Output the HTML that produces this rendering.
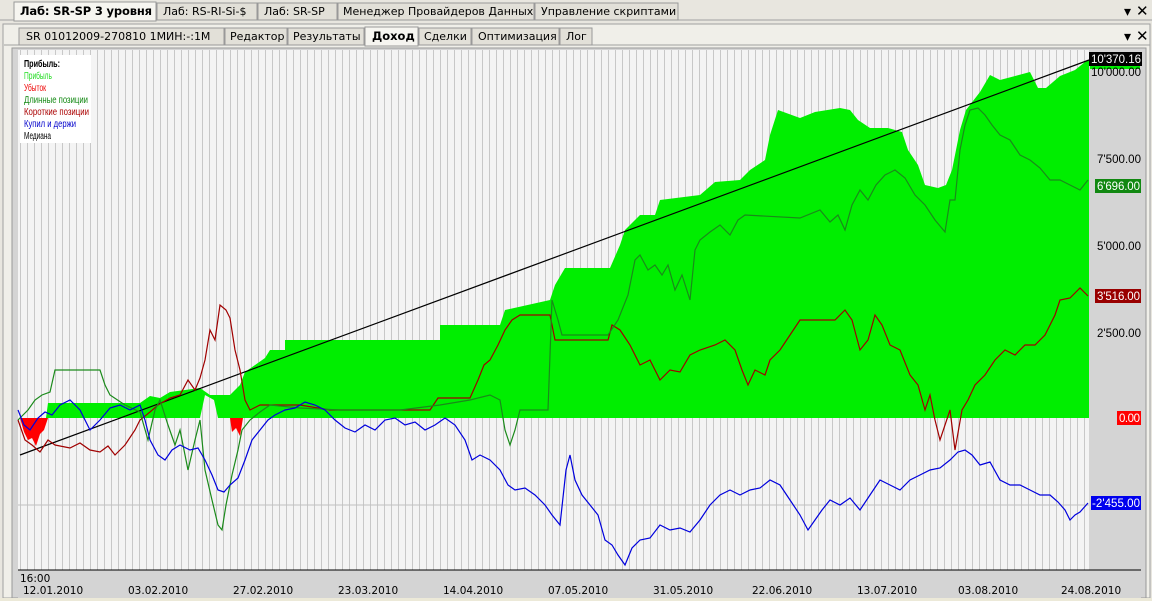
<!DOCTYPE html><html><head><meta charset="utf-8"><style>
body{margin:0;width:1152px;height:598px;overflow:hidden;background:#ece9d8;font-family:"Liberation Sans",sans-serif;font-size:12px}
svg text{font-family:"DejaVu Sans","Liberation Sans",sans-serif}
svg .l{font-family:"Liberation Sans",sans-serif}
</style></head><body>
<svg width="1152" height="598" xmlns="http://www.w3.org/2000/svg">
<defs><pattern id="g" x="20" y="0" width="7" height="10" patternUnits="userSpaceOnUse"><rect width="7" height="10" fill="#f4f4f4"/><rect x="0" width="1" height="10" fill="#c8c8c8"/></pattern></defs>
<rect width="1152" height="598" fill="#e8e6df"/>
<line x1="0" y1="20" x2="1152" y2="20" stroke="#a0a0a0"/>
<rect x="338" y="3" width="196" height="17" fill="#e2e0d8" stroke="#999"/>
<text x="343" y="15" font-size="11">Менеджер Провайдеров Данных</text>
<rect x="535" y="3" width="143" height="17" fill="#e2e0d8" stroke="#999"/>
<text x="541" y="15" font-size="11">Управление скриптами</text>
<rect x="157" y="3" width="100" height="17" fill="#e2e0d8" stroke="#999"/>
<text x="163" y="15" font-size="11">Лаб: RS-RI-Si-$</text>
<rect x="258" y="3" width="79" height="17" fill="#e2e0d8" stroke="#999"/>
<text x="264" y="15" font-size="11">Лаб: SR-SP</text>
<rect x="14" y="2" width="142" height="19" fill="#f6f5f0" stroke="#999"/>
<text x="20" y="15" font-size="11.5" font-weight="bold" textLength="132">Лаб: SR-SP 3 уровня</text>
<text x="1124" y="16" font-size="14">▾</text><text x="1136" y="16" font-size="15">✕</text>
<rect x="3" y="24" width="1147" height="574" fill="#f0efe9" stroke="#a0a0a0"/>
<line x1="4" y1="45" x2="1150" y2="45" stroke="#a0a0a0"/>
<rect x="19" y="28" width="205" height="17" fill="#e2e0d8" stroke="#999"/>
<text x="26" y="40" font-size="11">SR 01012009-270810 1МИН:-:1М</text>
<rect x="225" y="28" width="62" height="17" fill="#e2e0d8" stroke="#999"/>
<text x="230" y="40" font-size="11">Редактор</text>
<rect x="288" y="28" width="76" height="17" fill="#e2e0d8" stroke="#999"/>
<text x="293" y="40" font-size="11">Результаты</text>
<rect x="365" y="27" width="53" height="19" fill="#f6f5f0" stroke="#999"/>
<text x="372" y="40" font-size="11.5" font-weight="bold">Доход</text>
<rect x="419" y="28" width="52" height="17" fill="#e2e0d8" stroke="#999"/>
<text x="424" y="40" font-size="11">Сделки</text>
<rect x="472" y="28" width="87" height="17" fill="#e2e0d8" stroke="#999"/>
<text x="478" y="40" font-size="11">Оптимизация</text>
<rect x="560" y="28" width="32" height="17" fill="#e2e0d8" stroke="#999"/>
<text x="566" y="40" font-size="11">Лог</text>
<text x="1124" y="41" font-size="14">▾</text><text x="1136" y="41" font-size="15">✕</text>
<rect x="12" y="48" width="1134" height="550" fill="#d4d4d4" stroke="#999"/>
<rect x="18" y="50" width="1071" height="520" fill="url(#g)"/>
<line x1="18" y1="505" x2="1089" y2="505" stroke="#c0c0c0"/>
<polygon fill="#ff0000" points="20,418 24,432 28,440 32,438 36,446 40,434 44,430 48,418" />
<polygon fill="#ff0000" points="230,418 232,432 236,428 240,436 243,418"/>
<polygon fill="#00ee00" points="46,418 48,403 140,403 150,396 160,398 170,392 200,388 210,395 230,395 240,385 245,372 265,358 270,350 285,350 285,340 440,340 440,325 500,325 505,310 550,300 555,285 565,268 610,268 620,245 625,230 640,215 655,215 660,200 700,195 715,182 740,180 750,170 765,160 770,135 778,110 800,118 815,112 840,108 850,110 858,120 870,128 888,128 902,132 908,150 918,165 925,185 938,188 946,185 952,170 960,130 966,110 980,92 990,75 1000,80 1030,72 1038,88 1046,88 1060,76 1075,70 1085,62 1089,60 1089,418 246,418 243,418 230,418 218,418 214,400 205,395 200,418"/>
<line x1="20" y1="455" x2="1089" y2="60" stroke="#000" stroke-width="1.2"/>
<polyline fill="none" stroke="#a00000" stroke-width="1.2" points="18,420 25,440 32,445 40,452 48,440 55,445 70,448 80,443 90,450 100,452 108,446 115,455 125,445 135,430 140,420 150,412 158,405 170,398 180,395 188,380 195,390 200,378 205,360 210,330 215,340 220,305 226,310 230,318 235,350 240,370 245,400 250,410 260,405 300,405 330,410 430,410 438,398 470,398 478,380 484,365 490,360 498,345 505,330 512,320 520,315 550,315 555,340 608,340 612,325 620,330 630,345 640,365 650,360 660,380 670,370 680,372 690,355 700,350 715,345 725,340 735,350 742,370 748,385 755,370 765,375 770,360 780,350 790,335 800,320 835,320 845,310 852,320 860,350 868,340 875,315 882,325 890,345 900,350 910,375 918,385 925,410 930,395 935,420 940,440 945,425 950,410 955,450 962,410 968,400 975,385 985,375 995,360 1005,350 1015,355 1025,345 1035,345 1045,335 1055,315 1060,300 1070,298 1080,288 1088,296"/>
<polyline fill="none" stroke="#1a8a1a" stroke-width="1.2" points="18,420 28,410 35,400 42,395 50,392 55,370 100,370 105,385 110,395 125,405 140,412 148,440 155,410 160,400 168,425 175,445 180,430 188,470 195,440 200,420 205,470 212,500 218,525 222,530 226,505 232,475 238,450 242,430 250,420 260,412 270,405 300,408 340,410 400,410 440,405 470,400 490,395 500,400 505,430 510,445 515,430 520,410 548,410 552,300 558,320 562,335 608,335 618,320 628,295 635,260 640,255 648,270 655,265 662,275 668,265 675,290 682,275 690,300 695,250 700,240 710,232 720,225 730,235 738,220 745,215 800,218 820,210 830,222 838,215 845,230 852,205 860,190 868,200 876,185 885,175 895,170 905,178 915,195 925,205 935,220 945,232 950,200 955,200 960,150 965,125 970,110 978,108 985,115 992,125 1000,135 1010,140 1020,155 1030,160 1040,168 1050,180 1060,180 1070,185 1080,190 1088,180"/>
<polyline fill="none" stroke="#0000dd" stroke-width="1.2" points="18,410 24,425 30,430 38,418 45,412 52,415 60,405 70,400 80,410 90,430 100,420 110,408 120,405 130,410 140,405 145,420 150,440 158,455 165,460 172,450 180,445 190,450 198,448 205,460 212,475 218,490 224,492 230,485 238,478 245,460 252,440 260,430 268,420 275,415 285,410 295,408 305,402 315,405 325,410 335,420 345,428 355,432 365,425 375,430 385,420 395,418 405,425 415,422 425,430 435,425 445,418 455,425 465,440 472,460 480,455 490,460 500,470 508,485 515,490 525,488 535,495 545,505 552,515 560,525 566,470 570,455 575,480 582,495 590,505 598,515 605,540 612,545 618,555 625,565 632,548 640,540 650,538 660,525 670,530 680,528 690,532 700,520 710,505 720,495 730,490 740,495 750,490 760,488 770,480 780,485 790,500 800,515 808,530 815,520 822,510 830,500 840,505 850,498 860,510 870,495 880,480 890,485 900,490 910,480 920,475 930,470 940,468 950,460 958,452 965,450 972,455 980,465 990,462 1000,480 1010,485 1020,485 1030,490 1040,495 1050,495 1058,502 1065,510 1070,520 1075,515 1080,512 1088,503"/>
<rect x="20" y="55" width="71" height="88" fill="#fff"/>
<g font-size="10" class="l">
<text class="l" x="24" y="67" font-weight="bold" fill="#000" textLength="36" lengthAdjust="spacingAndGlyphs">Прибыль:</text>
<text class="l" x="24" y="79" fill="#22dd22" textLength="28" lengthAdjust="spacingAndGlyphs">Прибыль</text>
<text class="l" x="24" y="91" fill="#ee0000" textLength="22" lengthAdjust="spacingAndGlyphs">Убыток</text>
<text class="l" x="24" y="103" fill="#118811" textLength="64" lengthAdjust="spacingAndGlyphs">Длинные позиции</text>
<text class="l" x="24" y="115" fill="#aa0000" textLength="65" lengthAdjust="spacingAndGlyphs">Короткие позиции</text>
<text class="l" x="24" y="127" fill="#0000cc" textLength="52" lengthAdjust="spacingAndGlyphs">Купил и держи</text>
<text class="l" x="24" y="139" fill="#000" textLength="27" lengthAdjust="spacingAndGlyphs">Медиана</text>
</g>
<g font-size="11.5">
<rect x="1089" y="52" width="53" height="14" fill="#000"/><text class="l" x="1091" y="63" fill="#fff" textLength="50">10'370.16</text>
<rect x="1090" y="66" width="50" height="3" fill="#00ee00"/>
<text class="l" x="1091" y="76" fill="#000" textLength="50">10'000.00</text>
<text class="l" x="1097" y="163" fill="#000" textLength="44">7'500.00</text>
<rect x="1095" y="179" width="46" height="14" fill="#118811"/><text class="l" x="1097" y="190" fill="#fff" textLength="43">6'696.00</text>
<text class="l" x="1097" y="250" fill="#000" textLength="44">5'000.00</text>
<rect x="1095" y="289" width="46" height="14" fill="#990000"/><text class="l" x="1097" y="300" fill="#fff" textLength="43">3'516.00</text>
<text class="l" x="1097" y="337" fill="#000" textLength="44">2'500.00</text>
<rect x="1117" y="411" width="24" height="14" fill="#ff0000"/><text class="l" x="1119" y="422" fill="#fff" textLength="21">0.00</text>
<rect x="1091" y="496" width="50" height="14" fill="#0000ee"/><text class="l" x="1092" y="507" fill="#fff" textLength="48">-2'455.00</text>
</g>
<line x1="18" y1="570" x2="1141" y2="570" stroke="#000"/>
<rect x="18" y="571" width="1123" height="27" fill="#d4d4d4"/>
<g font-size="10.5" fill="#000">
<text x="20" y="582">16:00</text>
<text x="23" y="594">12.01.2010</text>
<text x="128" y="594">03.02.2010</text>
<text x="233" y="594">27.02.2010</text>
<text x="338" y="594">23.03.2010</text>
<text x="443" y="594">14.04.2010</text>
<text x="548" y="594">07.05.2010</text>
<text x="653" y="594">31.05.2010</text>
<text x="752" y="594">22.06.2010</text>
<text x="857" y="594">13.07.2010</text>
<text x="958" y="594">03.08.2010</text>
<text x="1061" y="594">24.08.2010</text>
</g>
</svg>
</body></html>
